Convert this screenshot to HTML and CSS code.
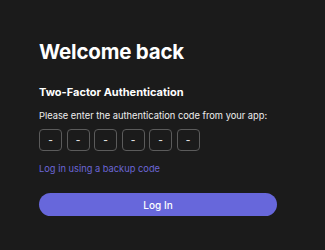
FILE: index.html
```html
<!DOCTYPE html>
<html>
<head>
<meta charset="utf-8">
<link rel="stylesheet" href="styles.css">
</head>
<body>
<main class="card">
  <h1 class="title">Welcome back</h1>
  <h2 class="subtitle">Two-Factor Authentication</h2>
  <p class="hint">Please enter the authentication code from your app:</p>
  <div class="code">
    <span class="digit">-</span>
    <span class="digit">-</span>
    <span class="digit">-</span>
    <span class="digit">-</span>
    <span class="digit">-</span>
    <span class="digit">-</span>
  </div>
  <a class="backup" href="#">Log in using a backup code</a>
  <button class="login">Log In</button>
</main>
</body>
</html>
```
FILE: styles.css
```css
html, body {
  margin: 0;
  padding: 0;
  background: #1b1b1b;
  height: 100%;
}
body {
  font-family: Inter, "Noto Sans", sans-serif;
  color: #ffffff;
}
.card {
  width: 238px;
  padding: 40px 0 0 39px;
  display: flex;
  flex-direction: column;
  align-items: flex-start;
}
.title {
  margin: 0;
  font-size: 20.5px;
  font-weight: 700;
  letter-spacing: -0.2px;
  line-height: 24px;
}
.subtitle {
  margin: 21px 0 0;
  font-size: 11px;
  font-weight: 700;
  line-height: 14px;
}
.hint {
  margin: 10px 0 0;
  font-size: 9.3px;
  line-height: 13px;
  color: #eeeeee;
  white-space: nowrap;
}
.code {
  margin-top: 7px;
  display: flex;
  gap: 4.5px;
}
.digit {
  width: 21px;
  height: 20px;
  border: 1px solid #5b5b5b;
  border-radius: 4px;
  display: flex;
  align-items: center;
  justify-content: center;
  font-size: 10px;
  font-weight: 600;
  color: #dddddd;
}
.backup {
  margin-top: 11px;
  font-size: 9.3px;
  line-height: 13px;
  color: #6b66d6;
  text-decoration: none;
}
.login {
  margin-top: 18px;
  width: 238px;
  height: 23px;
  border: none;
  border-radius: 12px;
  background: #6767db;
  color: #ffffff;
  font-family: Inter, "Noto Sans", sans-serif;
  font-size: 10px;
  font-weight: 500;
  padding: 0;
}
```
